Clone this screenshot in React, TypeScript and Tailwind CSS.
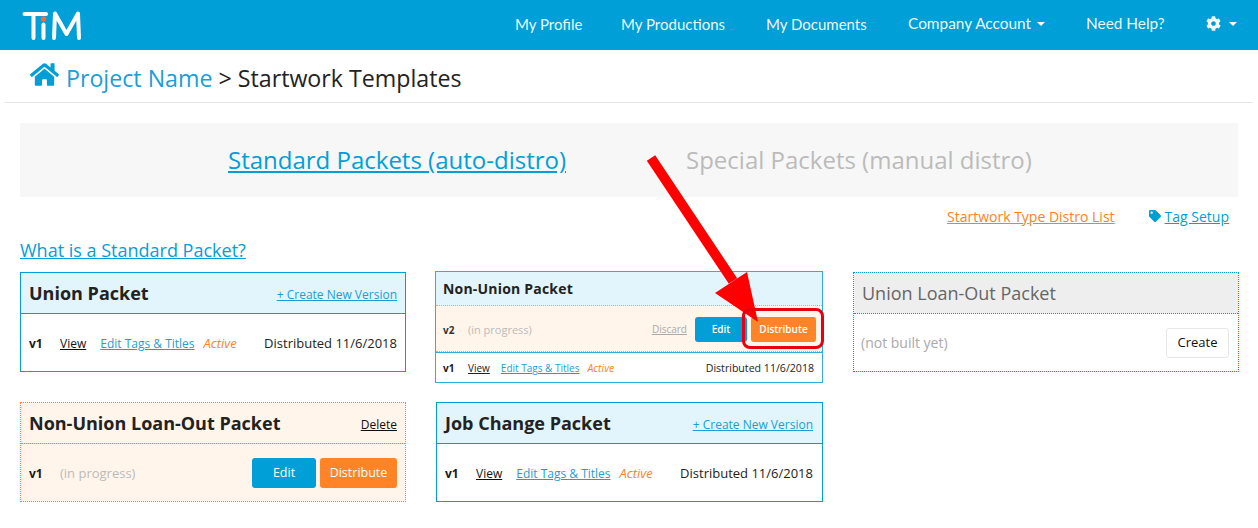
import { FaHome, FaTag, FaCog } from "react-icons/fa";

const blue = "text-[#019fd7]";

function V1Row({ small, pr = "pr-[8px]", pl = "pl-[8px]" }: { small?: boolean; pr?: string; pl?: string }) {
  if (small) {
    return (
      <div className="flex items-center h-[29px] pt-[2px] pl-[7px] pr-[8px] text-[10px]">
        <b className="text-[10px] w-[25px] text-[#1a1a1a]">v1</b>
        <a className="underline text-[10px] text-[#222] mr-[11px]">View</a>
        <a className="underline text-[#1b9ed8] mr-[8px]">Edit Tags &amp; Titles</a>
        <i className="text-[10.5px] text-[#ff7f27]">Active</i>
        <span className="ml-auto text-[10.6px] text-[#222]">Distributed 11/6/2018</span>
      </div>
    );
  }
  return (
    <div className={`flex items-center h-[57px] pt-[2px] ${pl} ${pr} text-[12px]`}>
      <b className="text-[12px] w-[31px] text-[#1a1a1a]">v1</b>
      <a className="underline text-[#111] mr-[14px]">View</a>
      <a className="underline text-[#1b9ed8] mr-[9px]">Edit Tags &amp; Titles</a>
      <i className="text-[13px] text-[#ff7f27]">Active</i>
      <span className="ml-auto text-[13px] text-[#222]">Distributed 11/6/2018</span>
    </div>
  );
}

function Btn({ color, w, h, text, label }: { color: string; w: string; h: string; text: string; label: string }) {
  return <button className={`${color} ${w} ${h} ${text} text-white rounded-[3px]`}>{label}</button>;
}

export default function App() {
  return (
    <div className="relative w-[1258px] h-[528px] overflow-hidden bg-white font-['Open_Sans',sans-serif] text-[#222]">
      <header className="h-[50px] bg-[#019fd7] flex items-center">
        <svg width="64" height="34" viewBox="0 0 64 34" className="ml-[20px]" fill="none" stroke="#fff" strokeWidth="4" strokeLinejoin="round">
          <path d="M4.5 6H26" strokeWidth="4" strokeLinecap="round" />
          <path d="M13.5 6V30" strokeLinecap="round" />
          <path d="M23.5 16.5V30" strokeLinecap="round" />
          <circle cx="23.5" cy="11" r="2.7" fill="#f26b3a" stroke="none" />
          <path d="M34 30L35 5.5L46.5 26L58 5.5L59 30" strokeLinecap="round" strokeWidth="4" />
        </svg>
        <nav className="ml-[431px] flex items-center -mt-[2px] font-['Lato',sans-serif] text-[15px] text-white/95">
          <span className="w-[106px]">My Profile</span>
          <span className="w-[145px]">My Productions</span>
          <span className="w-[142px]">My Documents</span>
          <span className="w-[178px] flex items-center text-[15.4px]">Company Account<i className="ml-[6px] mt-[1px] border-x-[4px] border-x-transparent border-t-[4px] border-t-white" /></span>
          <span className="w-[120px] text-[15.4px]">Need Help?</span>
          <span className="flex items-center">
            <FaCog className="text-[15px]" />
            <i className="ml-[8px] mt-[1px] border-x-[4px] border-x-transparent border-t-[4px] border-t-white" />
          </span>
        </nav>
      </header>

      <div className="ml-[5px] mr-[5px] h-[53px] border-b border-[#e5e5e5] flex items-center pl-[25px] text-[23.2px]">
        <FaHome className={`${blue} text-[29px] mr-[7px] mb-[3px]`} />
        <span className="text-[#1b9ed8] mt-[5px]">Project Name</span>
        <span className="text-[#222] mt-[5px]">&nbsp;&gt; Startwork Templates</span>
      </div>

      <div className="mx-[20px] mt-[20px] h-[74px] bg-[#f7f7f7] flex items-center text-[24px]">
        <a className="ml-[208px] underline text-[#019fd7]">Standard Packets (auto-distro)</a>
        <span className="ml-[120px] text-[#bbbbbb]">Special Packets (manual distro)</span>
      </div>

      <div className="mx-[20px] mt-[9px] flex justify-end items-center text-[14px] h-[20px]">
        <a className="underline text-[#ff7f27] mr-[34px]">Startwork Type Distro List</a>
        <FaTag className="text-[12px] text-[#019fd7] mr-[4px]" />
        <a className="underline text-[#019fd7] mr-[9px]">Tag Setup</a>
      </div>

      <div className="ml-[20px] mt-[12px] h-[24px] text-[18px] leading-[24px]">
        <a className="underline text-[#019fd7]">What is a Standard Packet?</a>
      </div>

      <div className="mx-[20px] mt-[10px] grid grid-cols-[386px_388px_387px] gap-x-[29px]">
        <div className="flex flex-col gap-[30px]">
          <section className="h-[100px] border border-[#019fd7]">
            <div className="h-[41px] bg-[#e2f4fc] border-b border-[#019fd7] flex items-center justify-between pl-[8px] pr-[8px]">
              <b className="text-[18px] text-[#222]">Union Packet</b>
              <a className="underline text-[12px] pt-[4px] text-[#1b9ed8]">+ Create New Version</a>
            </div>
            <V1Row />
          </section>
          <section className="h-[100px] border border-dotted border-[#ff7f27] bg-[#fff5ea]">
            <div className="h-[41px] border-b border-dotted border-[#ff7f27] flex items-center justify-between pl-[8px] pr-[8px]">
              <b className="text-[18px] text-[#222]">Non-Union Loan-Out Packet</b>
              <a className="underline text-[12px] pt-[4px] text-[#111]">Delete</a>
            </div>
            <div className="h-[57px] pt-[2px] flex items-center pl-[8px] pr-[8px] text-[13px]">
              <b className="text-[12px] w-[31px] text-[#1a1a1a]">v1</b>
              <span className="text-[#bbbbbb]">(in progress)</span>
              <div className="ml-auto flex gap-[4px] -mt-[1px]">
                <Btn color="bg-[#019fd7]" w="w-[64px]" h="h-[30px]" text="text-[12.5px]" label="Edit" />
                <Btn color="bg-[#ff8427]" w="w-[77px]" h="h-[30px]" text="text-[12.5px]" label="Distribute" />
              </div>
            </div>
          </section>
        </div>

        <div className="flex flex-col gap-[19px] -mt-[1px]">
          <section className="h-[112px] border border-[#34abdf]">
            <div className="h-[34px] bg-[#e2f4fc] border-b border-dotted border-[#ff9f50] flex items-center pl-[7px]">
              <b className="text-[14px] tracking-[0.2px] text-[#222]">Non-Union Packet</b>
            </div>
            <div className="h-[46px] pt-[2px] bg-[#fff5ea] border-b border-dotted border-[#ff9f50] flex items-center pl-[7px] pr-[6px] text-[10px]">
              <b className="text-[10px] w-[25px] mt-[2px] text-[#333]">v2</b>
              <span className="text-[11px] mt-[2px] text-[#bbbbbb]">(in progress)</span>
              <a className="ml-auto underline text-[#aaaaaa] mr-[8px]">Discard</a>
              <div className="flex gap-[4px]">
                <Btn color="bg-[#019fd7]" w="w-[52px]" h="h-[25px]" text="text-[10px] font-semibold" label="Edit" />
                <Btn color="bg-[#ff8427]" w="w-[65px]" h="h-[25px]" text="text-[10px] font-semibold" label="Distribute" />
              </div>
            </div>
            <div className="h-[1px] bg-[#34abdf]" />
            <V1Row small />
          </section>
          <section className="h-[100px] border border-[#019fd7] ml-[1px]">
            <div className="h-[41px] bg-[#e2f4fc] border-b border-[#019fd7] flex items-center justify-between pl-[8px] pr-[9px]">
              <b className="text-[18px] text-[#222]">Job Change Packet</b>
              <a className="underline text-[12px] pt-[4px] text-[#1b9ed8]">+ Create New Version</a>
            </div>
            <V1Row pr="pr-[9px]" />
          </section>
        </div>

        <div className="ml-[1px]">
          <section className="h-[100px] border border-dotted border-[#019fd7]">
            <div className="h-[41px] bg-[#eeeeee] border-b border-dotted border-[#019fd7] flex items-center pl-[8px]">
              <span className="text-[18px] text-[#666]">Union Loan-Out Packet</span>
            </div>
            <div className="h-[57px] flex items-center justify-between pl-[7px] pr-[9px] text-[14px]">
              <span className="text-[#aaaaaa]">(not built yet)</span>
              <button className="w-[63px] h-[30px] bg-white border border-[#e6e6e6] rounded-[3px] text-[13px] text-[#111]">Create</button>
            </div>
          </section>
        </div>
      </div>

      <svg className="absolute inset-0 pointer-events-none" width="1258" height="528" fill="none">
        <path d="M651 158L733 281" stroke="#ff0000" strokeWidth="10" />
        <path d="M747 272L715 293L758 322Z" fill="#ff0000" />
      </svg>
      <div className="absolute left-[742px] top-[308px] w-[82px] h-[41px] border-[3px] border-[#e60012] rounded-[8px] pointer-events-none" />
    </div>
  );
}
